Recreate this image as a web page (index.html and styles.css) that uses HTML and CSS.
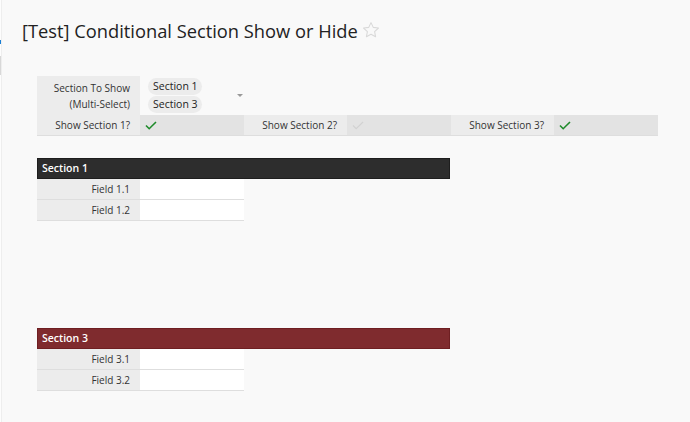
FILE: index.html
```html
<!DOCTYPE html>
<html>
<head>
<meta charset="utf-8">
<link rel="stylesheet" href="styles.css">
</head>
<body>
<div class="app">
  <aside class="side">
    <span class="side-link"></span>
    <span class="side-box"></span>
  </aside>
  <main class="main">
    <h1 class="title">[Test] Conditional Section Show or Hide
      <svg class="star" viewBox="0 0 20 20" width="18" height="18"><path d="M10 1.8l2.5 5.3 5.8.7-4.3 4 1.1 5.7L10 14.7l-5.1 2.8 1.1-5.7-4.3-4 5.8-.7z" fill="none" stroke="#d9d9d9" stroke-width="1.2" stroke-linejoin="round"/></svg>
    </h1>

    <div class="form">
      <div class="row row-multi">
        <div class="label">Section To Show<br>(Multi-Select)</div>
        <div class="value multi">
          <div class="pills">
            <span class="pill">Section 1</span>
            <span class="pill">Section 3</span>
          </div>
          <span class="caret"></span>
        </div>
      </div>
      <div class="row row-checks">
        <div class="label">Show Section 1?</div>
        <div class="value check-cell"><svg class="check on" viewBox="0 0 12 9" width="12" height="9"><path d="M1 4.5l3.2 3.2L11 1" fill="none" stroke-width="1.6"/></svg></div>
        <div class="label">Show Section 2?</div>
        <div class="value check-cell"><svg class="check off" viewBox="0 0 12 9" width="12" height="9"><path d="M1 4.5l3.2 3.2L11 1" fill="none" stroke-width="1.2"/></svg></div>
        <div class="label">Show Section 3?</div>
        <div class="value check-cell"><svg class="check on" viewBox="0 0 12 9" width="12" height="9"><path d="M1 4.5l3.2 3.2L11 1" fill="none" stroke-width="1.6"/></svg></div>
      </div>
    </div>

    <section class="section s1">
      <div class="section-head dark">Section 1</div>
      <div class="field"><div class="label">Field 1.1</div><div class="fvalue"></div></div>
      <div class="field"><div class="label">Field 1.2</div><div class="fvalue"></div></div>
    </section>

    <section class="section s3">
      <div class="section-head red">Section 3</div>
      <div class="field"><div class="label">Field 3.1</div><div class="fvalue"></div></div>
      <div class="field"><div class="label">Field 3.2</div><div class="fvalue"></div></div>
    </section>
  </main>
</div>
</body>
</html>
```

FILE: styles.css
```css
* { box-sizing: border-box; }
html, body { margin: 0; padding: 0; }
body {
  background: #f9f9f9;
  font-family: "Open Sans", "Noto Sans", sans-serif;
  color: #333;
  width: 690px;
  height: 422px;
  overflow: hidden;
}
.app { display: flex; height: 422px; }
.side {
  width: 2px;
  background: #fdfdfd;
  border-right: 1px solid #eeeeee;
  overflow: hidden;
  display: flex;
  flex-direction: column;
  padding-top: 40px;
}
.side-link { display: block; width: 1px; height: 4px; background: #1a7fd4; }
.side-box { display: block; margin-top: 12px; height: 19px; border: 1px solid #d8d8d8; background: #fff; }

.main { flex: 1; padding: 17px 0 0 20px; }
.title {
  margin: 0;
  font-weight: 400;
  font-size: 18.3px;
  line-height: 27px;
  color: #222;
  display: flex;
  align-items: center;
  gap: 4px;
}
.star { display: block; margin-top: -1px; }

.form { margin: 32px 0 0 15px; width: 621px; font-size: 10px; }
.row { display: flex; }
.label {
  width: 103px;
  background: #ececec;
  text-align: right;
  padding-right: 10px;
  color: #333;
  flex: none;
}
.value { width: 104px; flex: none; }
.row-multi { height: 39px; }
.row-multi .label { padding-top: 4px; line-height: 16px; }
.multi { display: flex; align-items: flex-start; padding: 2px 0 0 8px; }
.pills { display: flex; flex-direction: column; gap: 1px; }
.pill {
  display: block;
  width: 54px;
  height: 17px;
  line-height: 17px;
  border-radius: 9px;
  background: #ececec;
  padding-left: 5px;
  color: #222;
  font-size: 10.5px;
}
.caret {
  margin: 16px 0 0 35px;
  width: 0; height: 0;
  border-left: 3px solid transparent;
  border-right: 3px solid transparent;
  border-top: 3px solid #999;
}
.row-checks { height: 21px; border-bottom: 1px solid #dedede; }
.row-checks .label { line-height: 20px; }
.check-cell { background: #e3e3e3; display: flex; align-items: center; padding-left: 5px; }
.check.on path { stroke: #1e8a2a; }
.check.off path { stroke: #d2d2d2; }

.section { margin-left: 15px; font-size: 10px; }
.s1 { margin-top: 22px; }
.s3 { margin-top: 107px; }
.section-head {
  width: 413px;
  height: 21px;
  line-height: 19px;
  color: #fff;
  font-weight: 600;
  padding-left: 4px;
  font-size: 10.5px;
}
.dark { background: #2d2d2d; border: 1px solid #1e1e1e; }
.red { background: #7f2b2e; border: 1px solid #6e1f22; }
.field { display: flex; height: 21px; width: 207px; border-bottom: 1px solid #dedede; }
.field .label { line-height: 20px; }
.fvalue { flex: 1; background: #fff; }
```
